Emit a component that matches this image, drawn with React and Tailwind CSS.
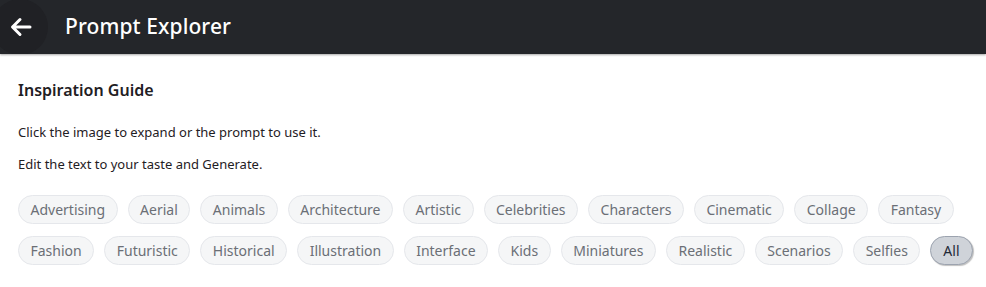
const categories = [
  "Advertising",
  "Aerial",
  "Animals",
  "Architecture",
  "Artistic",
  "Celebrities",
  "Characters",
  "Cinematic",
  "Collage",
  "Fantasy",
  "Fashion",
  "Futuristic",
  "Historical",
  "Illustration",
  "Interface",
  "Kids",
  "Miniatures",
  "Realistic",
  "Scenarios",
  "Selfies",
];

function Chip({ label, active }) {
  if (active) {
    return (
      <button className="h-[29px] px-[12px] rounded-full border border-[#9ca3af] bg-[#cfd3d9] text-[#1f2937] text-[14px] leading-none shadow-[1px_1px_1px_rgba(0,0,0,0.25)]">
        {label}
      </button>
    );
  }
  return (
    <button className="h-[29px] px-[11.5px] rounded-full border border-[#e5e7eb] bg-[#f5f6f7] text-[#6b6f76] text-[14px] leading-none">
      {label}
    </button>
  );
}

export default function App() {
  return (
    <div className="w-[986px] h-[287px] bg-white font-['Noto_Sans',sans-serif]">
      <header className="h-[54px] bg-[#24262a] flex items-center shadow-[0_1px_2px_rgba(0,0,0,0.35)] overflow-hidden">
        <button className="w-[56px] h-[56px] -ml-[8px] rounded-full bg-[#202125] flex items-center justify-center pl-[2px] shrink-0">
          <svg width="22" height="20" viewBox="0 0 22 20" fill="none">
            <path
              d="M20 10H3M10 2.5L2.5 10L10 17.5"
              stroke="white"
              strokeWidth="3"
              strokeLinecap="round"
              strokeLinejoin="round"
            />
          </svg>
        </button>
        <h1 className="ml-[17px] text-white text-[21px] font-medium tracking-[0.1px]">
          Prompt Explorer
        </h1>
      </header>
      <main className="px-[18px] pt-[24px]">
        <h2 className="text-[16px] font-semibold text-[#1f2024] leading-[24px]">
          Inspiration Guide
        </h2>
        <p className="mt-[20px] text-[13px] text-[#1f2024] leading-[20px]">
          Click the image to expand or the prompt to use it.
        </p>
        <p className="mt-[12px] text-[13px] text-[#1f2024] leading-[20px]">
          Edit the text to your taste and Generate.
        </p>
        <div className="mt-[21px] flex flex-wrap gap-x-[10px] gap-y-[12px] w-[960px]">
          {categories.map((c) => (
            <Chip key={c} label={c} />
          ))}
          <Chip label="All" active />
        </div>
      </main>
    </div>
  );
}
